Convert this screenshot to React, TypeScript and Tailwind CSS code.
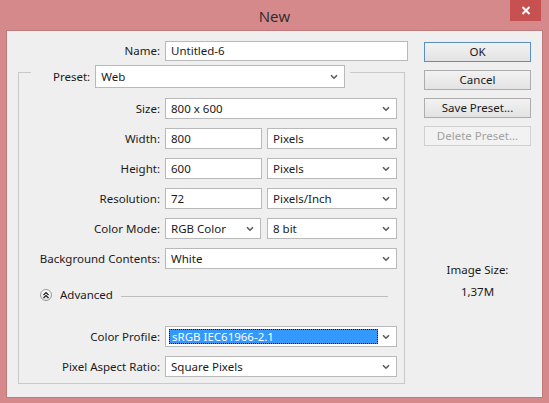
import React from "react";

const font = { fontFamily: '"Noto Sans", "Open Sans", sans-serif' };

function Chevron() {
  return (
    <svg width="8" height="6" viewBox="0 0 8 6" className="shrink-0">
      <path d="M1 1.2 L4 4.2 L7 1.2" fill="none" stroke="#5a5a5a" strokeWidth="1.6" />
    </svg>
  );
}

function Select({ value, w, h = "h-[21px]" }: { value: string; w: string; h?: string }) {
  return (
    <div className={`${w} ${h} border border-[#b9b9b9] bg-white flex items-center justify-between pl-[5px] pr-[6px]`}>
      <span className="leading-none">{value}</span>
      <Chevron />
    </div>
  );
}

function Input({ value, w }: { value: string; w: string }) {
  return (
    <div className={`${w} h-[21px] border border-[#b9b9b9] bg-white flex items-center pl-[5px]`}>
      <span className="leading-none">{value}</span>
    </div>
  );
}

function Row({ label, children }: { label: string; children: React.ReactNode }) {
  return (
    <div className="flex items-center h-[21px]">
      <div className="w-[146px] text-right pr-[5px]">{label}</div>
      <div className="flex gap-[5px]">{children}</div>
    </div>
  );
}

function Btn({ label, def, disabled }: { label: string; def?: boolean; disabled?: boolean }) {
  return (
    <div
      className={`h-[20px] w-[107px] flex items-center justify-center border ${
        def ? "border-[#5b8fc1]" : disabled ? "border-[#d0d0d0]" : "border-[#acacac]"
      } ${disabled ? "bg-[#f2f2f2] text-[#a3a3a3]" : "bg-gradient-to-b from-[#f2f2f2] to-[#e3e3e3] text-[#1a1a1a]"}`}
    >
      {label}
    </div>
  );
}

export default function App() {
  return (
    <div className="w-[549px] h-[403px] bg-[#d5898b] flex flex-col text-[11.5px] text-[#1a1a1a]" style={font}>
      <div className="relative h-[30px] flex items-center justify-center">
        <span className="text-[15px] text-[#2b2b2b] mt-[2px]" style={{ fontFamily: '"Open Sans", sans-serif' }}>New</span>
        <div className="absolute right-[8px] top-0 w-[31px] h-[21px] bg-[#c75050] flex items-center justify-center">
          <svg width="10" height="9" viewBox="0 0 10 9">
            <path d="M1.5 1 L8.5 8 M8.5 1 L1.5 8" stroke="#fff" strokeWidth="2" />
          </svg>
        </div>
      </div>
      <div className="mx-[6px] h-[368px] border border-[#c07a7c] bg-[#efefef] flex pl-[11px] pt-[10px]">
        <div className="w-[390px] flex flex-col">
          <div className="flex items-center h-[20px]">
            <div className="w-[147px] text-right pr-[5px]">Name:</div>
            <Input value="Untitled-6" w="w-[243px] !h-[20px]" />
          </div>
          <div className="mt-[11px] w-[387px] h-[312px] border border-[#c9c9c9] flex flex-col">
            <div className="-mt-[8px] flex items-center h-[23px] pl-[12px]">
              <div className="bg-[#efefef] pl-[22px] pr-[5px] h-full flex items-center">Preset:</div>
              <div className="bg-[#efefef] pr-[5px] h-full">
                <Select value="Web" w="w-[250px]" h="h-[23px]" />
              </div>
            </div>
            <div className="mt-[10px] flex flex-col gap-[9px]">
              <Row label="Size:">
                <Select value="800 x 600" w="w-[232px]" />
              </Row>
              <Row label="Width:">
                <Input value="800" w="w-[97px]" />
                <Select value="Pixels" w="w-[130px]" />
              </Row>
              <Row label="Height:">
                <Input value="600" w="w-[97px]" />
                <Select value="Pixels" w="w-[130px]" />
              </Row>
              <Row label="Resolution:">
                <Input value="72" w="w-[97px]" />
                <Select value="Pixels/Inch" w="w-[130px]" />
              </Row>
              <Row label="Color Mode:">
                <Select value="RGB Color" w="w-[96px]" />
                <div className="ml-[1px]">
                  <Select value="8 bit" w="w-[130px]" />
                </div>
              </Row>
              <Row label="Background Contents:">
                <Select value="White" w="w-[232px]" />
              </Row>
            </div>
            <div className="mt-[19px] flex items-center h-[14px] pl-[21px] pr-[16px]">
              <div className="w-[12px] h-[12px] rounded-full border border-[#9a9a9a] bg-gradient-to-b from-white to-[#e2e2e2] flex items-center justify-center">
                <svg width="8" height="8" viewBox="0 0 8 8">
                  <path d="M1.5 4 L4 1.5 L6.5 4 M1.5 7 L4 4.5 L6.5 7" fill="none" stroke="#222" strokeWidth="1.2" />
                </svg>
              </div>
              <span className="ml-[8px]">Advanced</span>
              <div className="flex-1 ml-[8px] h-px bg-[#bdbdbd] mt-[2px]" />
            </div>
            <div className="mt-[24px] flex flex-col gap-[9px]">
              <Row label="Color Profile:">
                <div className="w-[232px] h-[21px] border border-[#b9b9b9] bg-white flex items-center justify-between pl-[3px] pr-[6px]">
                  <div className="w-[209px] h-[15px] bg-[#3399ff] border border-dotted border-[#111] text-white flex items-center pl-[2px]">
                    <span className="leading-none">sRGB IEC61966-2.1</span>
                  </div>
                  <Chevron />
                </div>
              </Row>
              <Row label="Pixel Aspect Ratio:">
                <Select value="Square Pixels" w="w-[232px]" />
              </Row>
            </div>
          </div>
        </div>
        <div className="ml-[16px] mt-[1px] w-[107px] flex flex-col">
          <div className="flex flex-col gap-[8px]">
            <Btn label="OK" def />
            <Btn label="Cancel" />
            <Btn label="Save Preset..." />
            <Btn label="Delete Preset..." disabled />
          </div>
          <div className="mt-[115px] text-center">Image Size:</div>
          <div className="mt-[5px] text-center">1,37M</div>
        </div>
      </div>
    </div>
  );
}
